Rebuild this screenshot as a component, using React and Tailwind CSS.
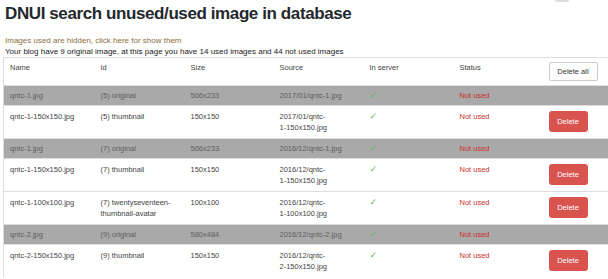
import React from 'react';

const rows = [
  { name: 'qntc-1.jpg', id: ['(5) original'], size: '506x233', source: ['2017/01/qntc-1.jpg'], original: true },
  { name: 'qntc-1-150x150.jpg', id: ['(5) thumbnail'], size: '150x150', source: ['2017/01/qntc-', '1-150x150.jpg'] },
  { name: 'qntc-1.jpg', id: ['(7) original'], size: '506x233', source: ['2016/12/qntc-1.jpg'], original: true },
  { name: 'qntc-1-150x150.jpg', id: ['(7) thumbnail'], size: '150x150', source: ['2016/12/qntc-', '1-150x150.jpg'] },
  { name: 'qntc-1-100x100.jpg', id: ['(7) twentyseventeen-', 'thumbnail-avatar'], size: '100x100', source: ['2016/12/qntc-', '1-100x100.jpg'] },
  { name: 'qntc-2.jpg', id: ['(9) original'], size: '580x484', source: ['2016/12/qntc-2.jpg'], original: true },
  { name: 'qntc-2-150x150.jpg', id: ['(9) thumbnail'], size: '150x150', source: ['2016/12/qntc-', '2-150x150.jpg'] },
];

const Lines = ({ parts }) => (
  <>
    {parts.map((p, i) => (
      <React.Fragment key={i}>
        {i > 0 && <br />}
        {p}
      </React.Fragment>
    ))}
  </>
);

const Row = ({ row }) => {
  const cell = row.original
    ? 'border-t border-[#ddd] px-[6px] py-[4px] align-top bg-[#a9a9a9] text-[#5e5e5e]'
    : 'border-t border-[#ddd] px-[6px] py-[5px] align-top';

  return (
    <tr>
      <td className={cell}>{row.name}</td>
      <td className={cell}><Lines parts={row.id} /></td>
      <td className={cell}>{row.size}</td>
      <td className={cell}><Lines parts={row.source} /></td>
      <td className={cell}>
        <span className="font-['DejaVu_Sans',sans-serif] text-[9px] leading-[11px] text-[#5cb85c]">✓</span>
      </td>
      <td className={cell}>
        <span className="text-[#c9302c]">Not used</span>
      </td>
      <td className={`${cell} pl-[5px]`}>
        {!row.original && (
          <button className="flex h-[21px] w-[39px] items-center justify-center rounded-[3px] bg-[#d9534f] text-[7.5px] text-white">
            Delete
          </button>
        )}
      </td>
    </tr>
  );
};

export default function App() {
  return (
    <div className="relative h-[279px] w-[608px] overflow-hidden bg-white font-['Liberation_Sans',Arial,sans-serif] text-[#444]">
      {/* bit of something cut off at the top */}
      <div className="absolute left-[555px] top-0 h-[2px] w-[14px] rounded-b-[2px] bg-[#ddd]" />

      <div className="px-[5px]">
        <h1 className="mt-[4px] text-[17px] font-bold leading-[20px] tracking-[-0.4px] text-[#23282d]">
          DNUI search unused/used image in database
        </h1>
        <p className="mt-[12px] text-[8px] leading-[10.5px] text-[#8a6d3b]">
          Images used are hidden, click here for show them
        </p>
        <p className="text-[8px] leading-[10.5px] text-[#222]">
          Your blog have 9 original image, at this page you have 14 used images and 44 not used images
        </p>
      </div>

      <table className="ml-[3px] w-[610px] table-fixed border-collapse border-l border-[#ddd] text-[7.5px] leading-[11px]">
        <colgroup>
          <col className="w-[91px]" />
          <col className="w-[90px]" />
          <col className="w-[89px]" />
          <col className="w-[90px]" />
          <col className="w-[90px]" />
          <col className="w-[90px]" />
          <col />
        </colgroup>
        <thead>
          <tr>
            <th className="border-t border-[#ddd] px-[6px] py-[4px] text-left align-top font-normal">Name</th>
            <th className="border-t border-[#ddd] px-[6px] py-[4px] text-left align-top font-normal">Id</th>
            <th className="border-t border-[#ddd] px-[6px] py-[4px] text-left align-top font-normal">Size</th>
            <th className="border-t border-[#ddd] px-[6px] py-[4px] text-left align-top font-normal">Source</th>
            <th className="border-t border-[#ddd] px-[6px] py-[4px] text-left align-top font-normal">In server</th>
            <th className="border-t border-[#ddd] px-[6px] py-[4px] text-left align-top font-normal">Status</th>
            <th className="border-t border-[#ddd] py-[4px] pl-[5px] text-left align-top font-normal">
              <button className="flex h-[19px] w-[49px] items-center justify-center rounded-[2px] border border-[#ccc] bg-white text-[7.5px] text-[#333]">
                Delete all
              </button>
            </th>
          </tr>
        </thead>
        <tbody>
          {rows.map((row, i) => (
            <Row key={i} row={row} />
          ))}
        </tbody>
      </table>
    </div>
  );
}
